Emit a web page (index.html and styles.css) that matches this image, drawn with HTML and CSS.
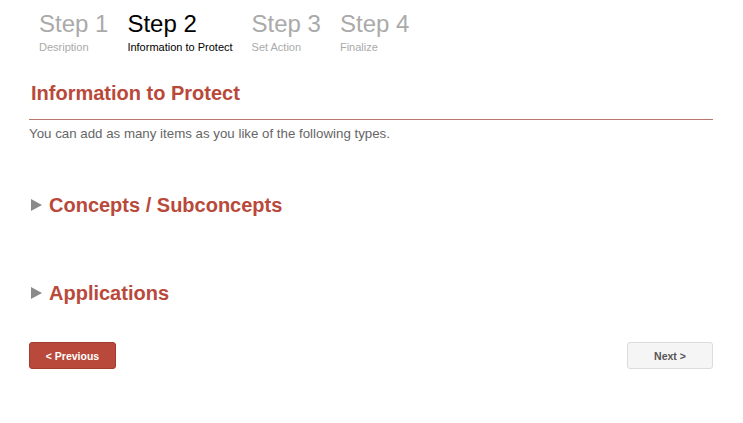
FILE: index.html
```html
<!DOCTYPE html>
<html>
<head>
<meta charset="utf-8">
<link rel="stylesheet" href="styles.css">
</head>
<body>
<div class="page">
  <ul class="steps">
    <li class="step"><div class="step-num">Step 1</div><div class="step-label">Desription</div></li>
    <li class="step active"><div class="step-num">Step 2</div><div class="step-label">Information to Protect</div></li>
    <li class="step"><div class="step-num">Step 3</div><div class="step-label">Set Action</div></li>
    <li class="step"><div class="step-num">Step 4</div><div class="step-label">Finalize</div></li>
  </ul>
  <h1 class="title">Information to Protect</h1>
  <p class="intro">You can add as many items as you like of the following types.</p>
  <div class="section"><span class="tri"></span><h2>Concepts / Subconcepts</h2></div>
  <div class="section"><span class="tri"></span><h2>Applications</h2></div>
  <div class="buttons">
    <button class="btn btn-prev">&lt; Previous</button>
    <button class="btn btn-next">Next &gt;</button>
  </div>
</div>
</body>
</html>
```
FILE: styles.css
```css
* { box-sizing: border-box; }
body {
  margin: 0;
  background: #fff;
  font-family: "Liberation Sans", Arial, sans-serif;
}
.page {
  padding: 0 30px 0 29px;
}
.steps {
  list-style: none;
  margin: 0;
  padding: 10px 0 0 10px;
  display: flex;
  gap: 19px;
}
.step { color: #aaa; }
.step-num {
  font-size: 24px;
  line-height: 28px;
}
.step-label {
  font-size: 11px;
  line-height: 14px;
  margin-top: 2px;
}
.step.active { color: #000; }
.title {
  margin: 27px 0 0 2px;
  font-size: 20px;
  line-height: 24px;
  font-weight: bold;
  color: #b9493a;
}
.intro {
  margin: 14px 0 0;
  border-top: 1px solid #b8776c;
  padding-top: 6px;
  font-size: 13.3px;
  line-height: 16px;
  color: #666;
}
.section {
  display: flex;
  align-items: center;
  gap: 7px;
  margin-top: 51px;
  margin-left: 2px;
  height: 24px;
}
.section + .section { margin-top: 64px; }
.tri {
  width: 0; height: 0;
  border-top: 6px solid transparent;
  border-bottom: 6px solid transparent;
  border-left: 11px solid #8a8a8a;
}
.section h2 {
  margin: 0;
  font-size: 20px;
  line-height: 24px;
  font-weight: bold;
  color: #b9493a;
}
.buttons {
  display: flex;
  justify-content: space-between;
  margin-top: 37px;
}
.btn {
  width: 87px;
  height: 27px;
  border-radius: 3px;
  font-family: "Liberation Sans", Arial, sans-serif;
  font-size: 10.5px;
  font-weight: bold;
  padding: 0;
  cursor: pointer;
}
.btn-prev {
  background: #b9493a;
  border: 1px solid #a33c2f;
  color: #fff;
}
.btn-next {
  width: 86px;
  background: #f5f5f5;
  border: 1px solid #dcdcdc;
  color: #555;
}
```
